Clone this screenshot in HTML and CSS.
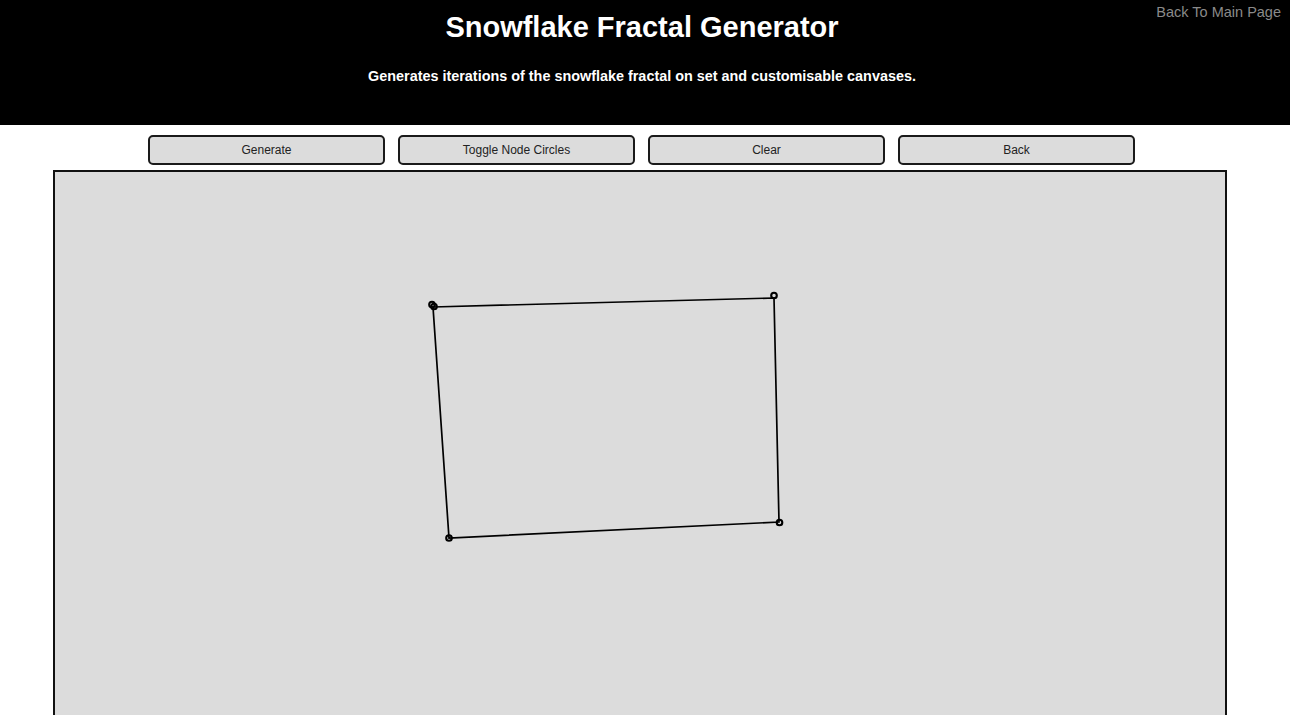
FILE: index.html
```html
<!DOCTYPE html>
<html lang="en">
<head>
<meta charset="utf-8">
<title>Snowflake Fractal Generator</title>
<link rel="stylesheet" href="styles.css">
</head>
<body>
<header class="header">
  <a class="back-link" href="#">Back To Main Page</a>
  <h1 class="title">Snowflake Fractal Generator</h1>
  <p class="subtitle">Generates iterations of the snowflake fractal on set and customisable canvases.</p>
</header>
<main class="main">
  <div class="controls">
    <button class="btn">Generate</button>
    <button class="btn">Toggle Node Circles</button>
    <button class="btn">Clear</button>
    <button class="btn">Back</button>
  </div>
  <div class="canvas">
    <svg class="drawing" width="1170" height="560" viewBox="55 172 1170 560" xmlns="http://www.w3.org/2000/svg">
      <g fill="none" stroke="#000">
        <polygon points="433,307 774,298 779,522 449,538" stroke-width="1.7"/>
        <g stroke-width="2.1">
          <circle cx="432" cy="304.5" r="2.8"/>
          <circle cx="434" cy="306.5" r="2.8"/>
          <circle cx="774" cy="295.5" r="2.8"/>
          <circle cx="779.5" cy="522.5" r="2.8"/>
          <circle cx="449" cy="538" r="2.8"/>
        </g>
      </g>
    </svg>
  </div>
</main>
</body>
</html>
```

FILE: styles.css
```css
* { box-sizing: border-box; }
html, body { margin: 0; padding: 0; }
body {
  font-family: "Liberation Sans", Arial, Helvetica, sans-serif;
  background: #fff;
  width: 1290px;
  overflow: hidden;
}
.header {
  position: relative;
  background: #000;
  height: 125px;
  padding-top: 10px;
  padding-right: 6px;
  text-align: center;
  color: #fff;
}
.back-link {
  position: absolute;
  top: 4px;
  right: 9px;
  color: #8a8a8a;
  font-size: 14.5px;
  text-decoration: none;
}
.title {
  margin: 0;
  font-size: 29px;
  line-height: 34px;
  font-weight: bold;
}
.subtitle {
  margin: 24px 0 0;
  font-size: 14.4px;
  line-height: 17px;
  font-weight: bold;
}
.main {
  padding-top: 10px;
}
.controls {
  display: flex;
  gap: 13px;
  padding-left: 148px;
}
.btn {
  width: 237px;
  height: 30px;
  background: #dcdcdc;
  border: 2px solid #1a1a1a;
  border-radius: 5px;
  font-family: "Liberation Sans", Arial, Helvetica, sans-serif;
  font-size: 12px;
  color: #222;
  padding: 0;
}
.canvas {
  margin: 5px 0 0 53px;
  width: 1174px;
  height: 560px;
  background: #dcdcdc;
  border: 2px solid #111;
}
.drawing { display: block; }
```
